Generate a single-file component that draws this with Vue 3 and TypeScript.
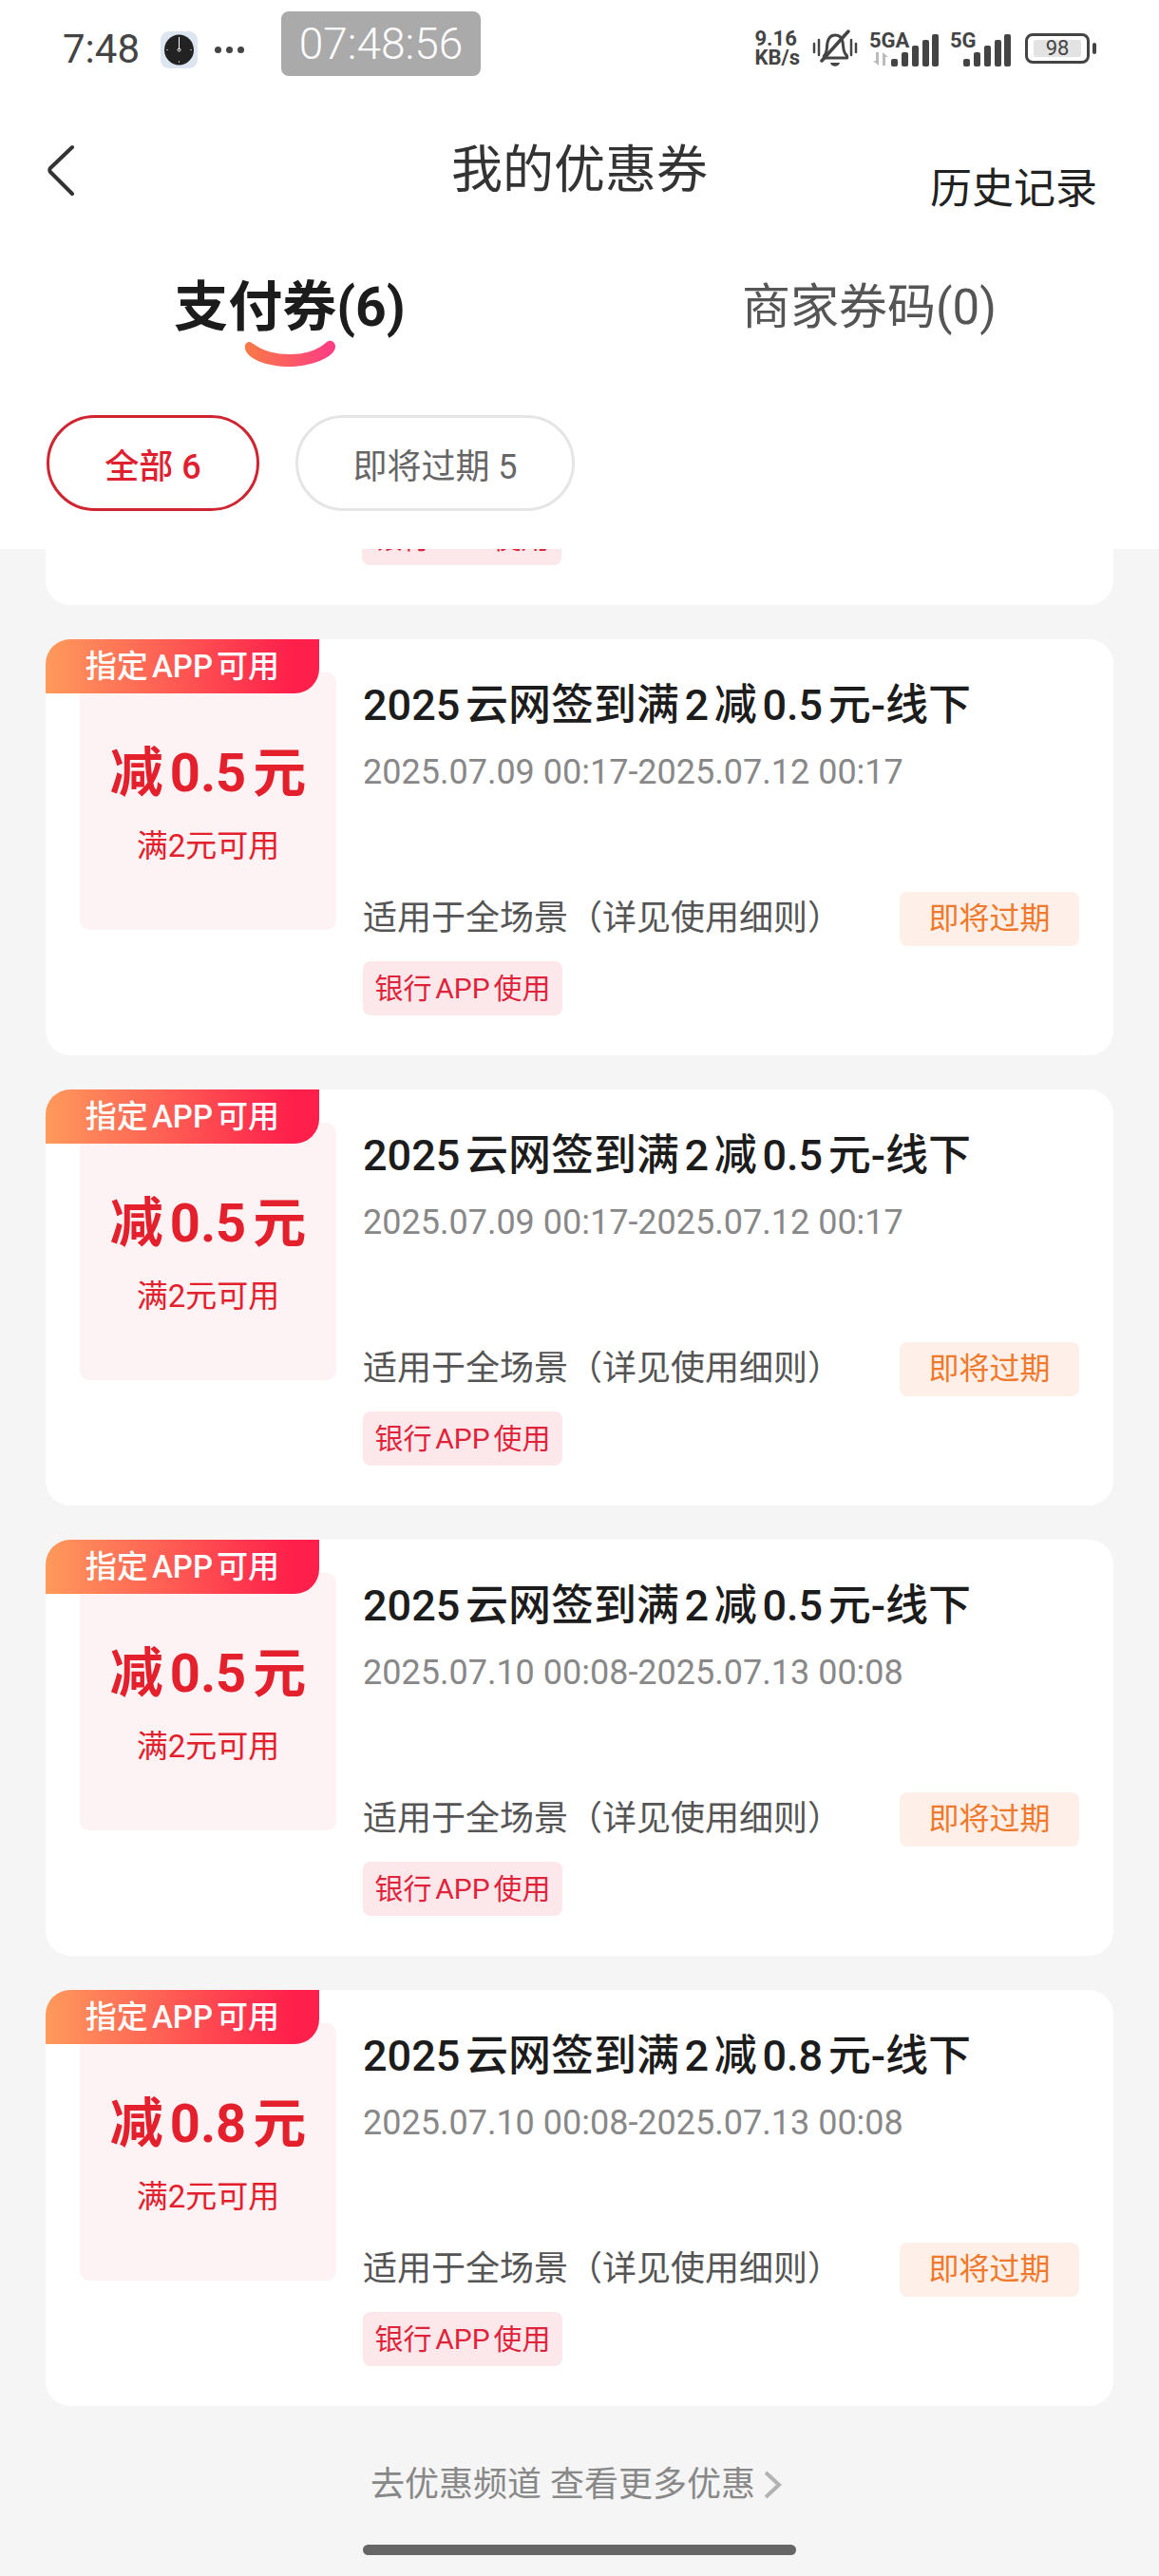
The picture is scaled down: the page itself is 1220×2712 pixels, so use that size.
<script setup lang="ts">
type Coupon = {
  amount: string
  title: string
  period: string
}

const coupons: Coupon[] = [
  { amount: '0.5', title: '2025云网签到满2减0.5元-线下', period: '2025.07.09 00:17-2025.07.12 00:17' },
  { amount: '0.5', title: '2025云网签到满2减0.5元-线下', period: '2025.07.09 00:17-2025.07.12 00:17' },
  { amount: '0.5', title: '2025云网签到满2减0.5元-线下', period: '2025.07.10 00:08-2025.07.13 00:08' },
  { amount: '0.8', title: '2025云网签到满2减0.8元-线下', period: '2025.07.10 00:08-2025.07.13 00:08' },
]

const signalBars = [
  { x: 0, h: 8 },
  { x: 11, h: 15 },
  { x: 22, h: 22 },
  { x: 33, h: 28 },
  { x: 43, h: 34 },
]
</script>

<template>
  <div class="page">
    <header class="top">
      <div class="status">
        <span class="clock">7:48</span>
        <svg class="clock-app" width="39" height="39" viewBox="0 0 39 39">
          <rect width="39" height="39" rx="9" fill="#dde5f0" />
          <ellipse cx="19.5" cy="19.5" rx="15.5" ry="16" fill="#222" />
          <path d="M19.5 6v13" stroke="#fff" stroke-width="1" />
          <circle cx="19.5" cy="19.5" r="1.5" fill="none" stroke="#fff" />
          <path d="M19.5 31v2M6 19.5h2M31 19.5h2" stroke="#aaa" stroke-width="1" />
        </svg>
        <span class="dots"><i></i><i></i><i></i></span>
        <span class="timer">07:48:56</span>

        <div class="status-right">
          <span class="speed">9.16<br />KB/s</span>
          <svg class="bell" width="48" height="42" viewBox="0 0 48 42" fill="none" stroke="#444">
            <path d="M13 27c3-3 2-8 3-13 1-5 4-8 8-8 4 0 7 2 8 7 1 5 0 11 4 14 1 1 1 3 0 3H13c-1 0-1-2 0-3Z" stroke-width="3" />
            <path d="M10 33 38 2" stroke-width="3.5" stroke-linecap="round" />
            <path d="M19 35h10c-1 5-9 5-10 0Z" fill="#444" stroke="none" />
            <path d="M2 15v9M7 11v16M41 11v16M46 15v9" stroke-width="2.5" stroke-linecap="round" />
          </svg>
          <div class="net net-a">
            <span class="net-label">5GA</span>
            <svg class="arrows" width="16" height="14" viewBox="0 0 16 14" fill="#bbb">
              <path d="M3 0h3v14L0 9h3ZM10 14h3V5h3L10 0Z" />
            </svg>
            <svg class="bars" width="50" height="34" viewBox="0 0 50 34" fill="#444">
              <rect v-for="bar in signalBars" :key="bar.x" :x="bar.x" :y="34 - bar.h" width="7" :height="bar.h" rx="2" />
            </svg>
          </div>
          <div class="net">
            <span class="net-label">5G</span>
            <svg class="bars" width="50" height="34" viewBox="0 0 50 34" fill="#444">
              <rect v-for="bar in signalBars" :key="bar.x" :x="bar.x" :y="34 - bar.h" width="7" :height="bar.h" rx="2" />
            </svg>
          </div>
          <div class="battery"><span>98</span></div>
          <i class="battery-nub"></i>
        </div>
      </div>

      <nav class="nav">
        <svg class="back" width="32" height="54" viewBox="0 0 32 54" fill="none">
          <path d="M28 3 5 25c-1 1-1 3 0 4l23 23" stroke="#333" stroke-width="4" stroke-linecap="round" />
        </svg>
        <h1>我的优惠券</h1>
        <a class="history">历史记录</a>
      </nav>

      <div class="tabs">
        <div class="tab active">
          <span>支付券(6)</span>
          <svg class="smile" width="96" height="28" viewBox="0 0 96 28">
            <defs>
              <linearGradient id="smile" x1="0" y1="0" x2="1" y2="0">
                <stop offset="0" stop-color="#f97a45" />
                <stop offset="1" stop-color="#ff3b85" />
              </linearGradient>
            </defs>
            <path
              d="M1 9C0 4 4 0 8 3c12 9 26 12 40 12s28-3 39-13c4-3 9 0 9 5 0 11-26 21-48 21C24 28 3 20 1 9Z"
              fill="url(#smile)"
            />
          </svg>
        </div>
        <div class="tab"><span>商家券码(0)</span></div>
      </div>

      <div class="chips">
        <button class="chip chip-on" type="button">全部 6</button>
        <button class="chip" type="button">即将过期 5</button>
      </div>
    </header>

    <main class="list">
      <!-- scrolled away under the header, only the foot of this card still shows -->
      <div class="card-foot">
        <span class="bank">银行APP使用</span>
      </div>

      <article v-for="(coupon, i) in coupons" :key="i" class="card">
        <span class="app-tag">指定APP可用</span>
        <div class="value">
          <strong>减{{ coupon.amount }}元</strong>
          <span>满2元可用</span>
        </div>
        <div class="info">
          <h2>{{ coupon.title }}</h2>
          <p class="period">{{ coupon.period }}</p>
          <div class="scope-row">
            <span class="scope">适用于全场景（详见使用细则）</span>
            <span class="expire">即将过期</span>
          </div>
          <span class="bank">银行APP使用</span>
        </div>
      </article>
    </main>

    <footer class="more">
      <a class="more-link">
        去优惠频道 查看更多优惠
        <svg width="20" height="30" viewBox="0 0 20 30" fill="none">
          <path d="M3 2 17 15 3 28" stroke="#b3b3b3" stroke-width="4" />
        </svg>
      </a>
      <div class="home-bar"></div>
    </footer>
  </div>
</template>

<style>
html,
body {
  margin: 0;
  background: #f5f5f5;
}
</style>

<style scoped>
.page {
  width: 1220px;
  height: 2712px;
  display: flex;
  flex-direction: column;
  overflow: hidden;
  background: #f5f5f5;
  font-family: Roboto, 'Noto Sans CJK SC', sans-serif;
  text-autospace: normal;
}

.top {
  height: 578px;
  flex: none;
  background: #fff;
}

.status {
  height: 100px;
  display: flex;
  align-items: flex-start;
  padding-left: 66px;
  box-sizing: border-box;
}

.clock {
  margin-top: 28px;
  font-size: 42px;
  line-height: 48px;
  color: #444;
}

.clock-app {
  margin: 33px 0 0 22px;
}

.dots {
  display: flex;
  gap: 5px;
  margin: 49px 0 0 18px;
}

.dots i {
  width: 7px;
  height: 7px;
  border-radius: 50%;
  background: #444;
}

.timer {
  width: 210px;
  height: 68px;
  margin: 12px 0 0 39px;
  border-radius: 8px;
  background: #aaa;
  color: #fff;
  font-size: 46px;
  font-weight: 300;
  line-height: 68px;
  text-align: center;
}

.status-right {
  display: flex;
  align-items: flex-start;
  margin-left: auto;
  padding-right: 66px;
}

.speed {
  margin-top: 31px;
  font-size: 22px;
  font-weight: 700;
  line-height: 20px;
  color: #444;
}

.bell {
  margin: 31px 0 0 13px;
}

.net {
  position: relative;
  width: 64px;
  height: 40px;
  margin: 33px 0 0 12px;
}

.net-a {
  width: 73px;
}

.net-label {
  position: absolute;
  left: 0;
  top: 0;
  font-size: 22px;
  font-weight: 700;
  line-height: 20px;
  color: #444;
}

.net .bars {
  position: absolute;
  right: 0;
  top: 3px;
}

.arrows {
  position: absolute;
  left: 4px;
  top: 22px;
}

.battery {
  width: 68px;
  height: 32px;
  margin: 35px 0 0 15px;
  padding: 4px 6px;
  box-sizing: border-box;
  border: 3px solid #444;
  border-radius: 8px;
  background: #fff;
}

.battery span {
  display: block;
  height: 100%;
  border-radius: 2px;
  background: #e3e3e3;
  color: #444;
  font-size: 22px;
  line-height: 18px;
  text-align: center;
}

.battery-nub {
  width: 4px;
  height: 12px;
  margin: 45px 0 0 3px;
  border-radius: 2px;
  background: #444;
}

.nav {
  height: 140px;
  display: flex;
  justify-content: space-between;
  padding: 0 65px 0 48px;
  box-sizing: border-box;
  position: relative;
}

.back {
  margin-top: 52px;
}

.nav h1 {
  position: absolute;
  left: 0;
  right: 0;
  top: 43px;
  margin: 0;
  font-size: 54px;
  font-weight: 400;
  line-height: 74px;
  text-align: center;
  color: #333;
}

.history {
  margin-top: 69px;
  font-size: 44px;
  line-height: 60px;
  color: #222;
}

.tabs {
  display: grid;
  grid-template-columns: 1fr 1fr;
  margin-top: 49px;
  padding-bottom: 51px;
}

.tab {
  display: flex;
  flex-direction: column;
  align-items: center;
  font-size: 51px;
  line-height: 70px;
  color: #555;
}

.tab.active {
  font-size: 57px;
  font-weight: 700;
  color: #1c1c1c;
}

.smile {
  display: block;
  margin-top: -1px;
}

.chips {
  display: flex;
  gap: 38px;
  padding-left: 49px;
}

.chip {
  width: 294px;
  height: 101px;
  padding: 0;
  border: 3px solid #e5e5e5;
  border-radius: 51px;
  background: #fff;
  color: #666;
  font-family: inherit;
  font-size: 36px;
}

.chip-on {
  width: 224px;
  border-color: #cf2530;
  color: #e0202e;
  font-weight: 500;
}

.list {
  height: 1955px;
  flex: none;
  display: flex;
  flex-direction: column;
  gap: 36px;
  padding: 0 48px;
  box-sizing: border-box;
  overflow: hidden;
}

.card-foot {
  height: 59px;
  flex: none;
  padding-left: 333px;
  border-radius: 0 0 26px 26px;
  background: #fff;
  overflow: hidden;
}

.card-foot .bank {
  margin-top: -40px;
}

.card {
  position: relative;
  display: flex;
  flex: none;
  gap: 28px;
  padding: 35px 36px 42px;
  border-radius: 26px;
  background: #fff;
}

.app-tag {
  position: absolute;
  left: 0;
  top: 0;
  width: 288px;
  height: 57px;
  border-radius: 26px 0 26px 0;
  background: linear-gradient(90deg, #ff9a5c, #ff1f4b 90%);
  color: #fff;
  font-size: 33px;
  font-weight: 500;
  line-height: 57px;
  text-align: center;
  z-index: 1;
}

.value {
  width: 270px;
  height: 271px;
  flex: none;
  display: flex;
  flex-direction: column;
  align-items: center;
  border-radius: 10px;
  background: #fdf2f4;
  color: #e3202c;
}

.value strong {
  margin-top: 68px;
  font-size: 56px;
  font-weight: 700;
  line-height: 76px;
}

.value span {
  margin-top: 17px;
  font-size: 33px;
  line-height: 44px;
  text-autospace: no-autospace;
}

.info {
  flex: 1;
  min-width: 0;
  padding-top: 7px;
}

.info h2 {
  margin: 0;
  font-size: 45px;
  font-weight: 500;
  line-height: 56px;
  color: #1c1c1c;
}

.period {
  margin: 20px 0 0;
  font-size: 36px;
  line-height: 44px;
  color: #888;
}

.scope-row {
  display: flex;
  justify-content: space-between;
  align-items: center;
  margin-top: 104px;
}

.scope {
  font-size: 36px;
  line-height: 57px;
  color: #555;
}

.expire {
  width: 189px;
  height: 57px;
  border-radius: 8px;
  background: #fef0e8;
  color: #f0792b;
  font-size: 32px;
  line-height: 57px;
  text-align: center;
}

.bank {
  display: block;
  width: 210px;
  height: 57px;
  margin-top: 16px;
  border-radius: 8px;
  background: #fce8ea;
  color: #e0233a;
  font-size: 30px;
  line-height: 57px;
  text-align: center;
}

.more {
  flex: 1;
  display: flex;
  flex-direction: column;
  align-items: center;
}

.more-link {
  display: flex;
  align-items: center;
  gap: 8px;
  margin-top: 59px;
  padding-right: 7px;
  font-size: 36px;
  line-height: 48px;
  color: #888;
}

.home-bar {
  width: 456px;
  height: 11px;
  margin-top: 39px;
  border-radius: 6px;
  background: #666;
}
</style>
